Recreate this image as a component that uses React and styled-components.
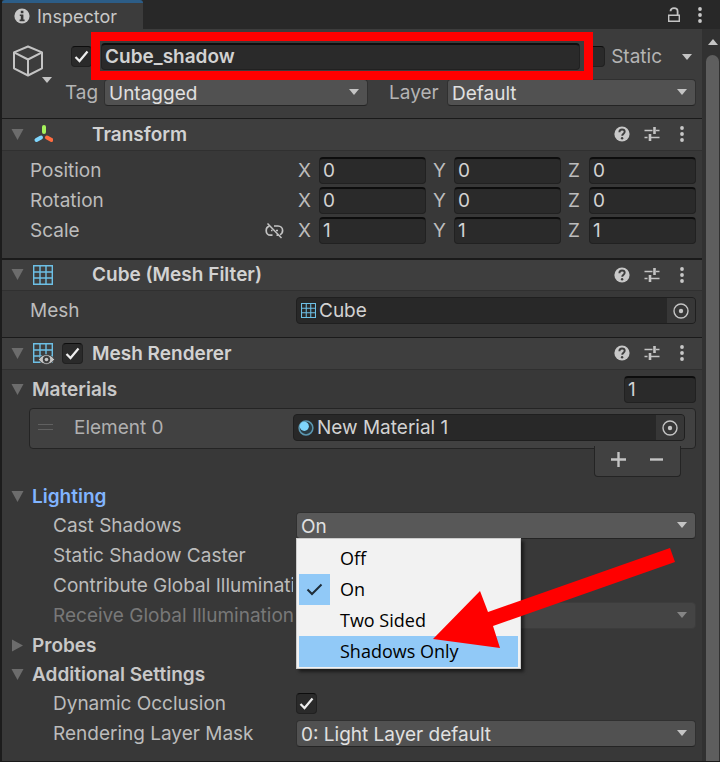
// App.jsx
import React, { useState } from "react";
import styled, { createGlobalStyle, css } from "styled-components";

const GlobalStyle = createGlobalStyle`
    * {
        box-sizing: border-box;
    }

    body {
        margin: 0;
        background: #383838;
        color: #c2c2c2;
        font-family: Inter, "Noto Sans", sans-serif;
        font-size: 19px;
        line-height: 27px;
    }

    button, input, select {
        margin: 0;
        font: inherit;
        color: inherit;
    }
`;

/* icons */

const InfoIcon = () => (
    <svg width="16" height="16" viewBox="0 0 16 16">
        <circle cx="8" cy="8" r="7.6" fill="#c8c8c8" />
        <path d="M6.8 2.8h2.6v2.4H6.8zM5.8 6.4h3.6v5h1.2v1.8H5.6v-1.8h1.2V8H5.8z" fill="#383838" />
    </svg>
);

const LockIcon = () => (
    <svg width="14" height="16" viewBox="0 0 14 16" fill="none" stroke="#c4c4c4">
        <path d="M1.7 8.2h10.6v6.1H1.7z" strokeWidth="1.4" />
        <path d="M3.5 4.2C3.500 2 5 1.200 7 1.200s3.600 1 3.600 3.200v3.600" strokeWidth="1.800" />
    </svg>
);

const DotsIcon = () => (
    <svg width="6" height="16" viewBox="0 0 6 16" fill="#c8c8c8">
        <circle cx="3" cy="2" r="1.9" />
        <circle cx="3" cy="8" r="1.9" />
        <circle cx="3" cy="14" r="1.9" />
    </svg>
);

const HelpIcon = () => (
    <svg width="16" height="16" viewBox="0 0 16 16">
        <circle cx="8" cy="8" r="7.6" fill="#c8c8c8" />
        <path d="M5.4 6.2C5.4 4.5 6.5 3.5 8 3.5s2.7 1 2.7 2.3c0 1.9-2.5 1.9-2.5 4" fill="none" stroke="#3e3e3e" strokeWidth="1.9" />
        <circle cx="8.1" cy="12.2" r="1.2" fill="#3e3e3e" />
    </svg>
);

const PresetIcon = () => (
    <svg width="16" height="16" viewBox="0 0 16 16" fill="none" stroke="#c4c4c4">
        <path d="M.5 4.5h8M12 4.5h3.5M.5 11.5h3M7 11.5h8.5" strokeWidth="1.4" />
        <path d="M10.5 1v7M6 8v7" strokeWidth="2.6" />
    </svg>
);

const CubeIcon = () => (
    <svg width="32" height="32" viewBox="0 0 32 32" fill="none" stroke="#c4c4c4" strokeWidth="2" strokeLinejoin="round">
        <path d="M16 1.5 30 7.3v16L16 30.5 2 23.3v-16z" />
        <path d="M2 7.3 16 14.5 30 7.3M16 14.5v16" />
    </svg>
);

const Arrow = ({ color = "#c4c4c4" }) => (
    <svg width="10" height="6" viewBox="0 0 10 6">
        <path d="M0 0h10L5 6z" fill={color} />
    </svg>
);

const FoldIcon = ({ open }) => (
    <svg width="13" height="13" viewBox="0 0 13 13">
        <path d={open ? "M.5 1h12l-6 11z" : "M1 .5v12l11-6z"} fill="#6c6c6c" />
    </svg>
);

const TransformIcon = () => (
    <svg width="20" height="20" viewBox="0 0 20 20" fill="none" strokeWidth="4" strokeLinecap="round">
        <path d="M11 3v5" stroke="#a6f25c" />
        <path d="m8 13.5-4.500 2.500" stroke="#7fd6fd" />
        <path d="m14 13.5 4.500 2.500" stroke="#ff6c40" />
    </svg>
);

const MeshIcon = ({ size = 20, eye }) => (
    <svg width={size} height={size} viewBox="0 0 20 20" fill="none" overflow="visible">
        <path d="M.7.7h18.6v18.6H.7zM7 .7v18.6M13 .7v18.6M.7 7h18.6M.7 13h18.6" stroke="#6dc0e6" strokeWidth="1.4" />
        {eye && (
            <>
                <path d="M5.5 16.5C9 10 18 10 21.5 16.5 18 23 9 23 5.5 16.5z" fill="#c4c4c4" stroke="#3e3e3e" />
                <circle cx="13.5" cy="16.5" r="3.7" fill="#3e3e3e" />
                <circle cx="13.5" cy="16.5" r="1.8" fill="#c4c4c4" />
            </>
        )}
    </svg>
);

const MaterialIcon = () => (
    <svg width="16" height="16" viewBox="0 0 16 16">
        <circle cx="8" cy="8" r="6.9" fill="#2a3b43" stroke="#5b97b1" strokeWidth="1.5" />
        <circle cx="6.3" cy="6.3" r="4.6" fill="#7fd6fd" />
    </svg>
);

const PickIcon = () => (
    <svg width="16" height="16" viewBox="0 0 16 16">
        <circle cx="8" cy="8" r="7" fill="none" stroke="#c4c4c4" strokeWidth="1.4" />
        <circle cx="8" cy="8" r="2.2" fill="#c4c4c4" />
    </svg>
);

const UnlinkIcon = () => (
    <svg width="19" height="16" viewBox="0 0 19 16" fill="none" stroke="#c4c4c4" strokeWidth="1.7">
        <path d="M4.5 3.2C2.5 3.6 1.2 5.4 1.2 7.7c0 2.6 1.8 4.5 4.3 4.5h2M9 3h4c2.600 0 4.600 2 4.600 4.500 0 2-1.100 3.500-2.600 4.200M11.500 12.200h2M6 7.500h1.500M11 7.500h2" />
        <path d="m2.500.5 14 14.500" strokeWidth="1.500" />
    </svg>
);

const Tick = () => (
    <svg width="15" height="13" viewBox="0 0 15 13">
        <path d="m1.5 7 4 4L13.5 1.500" fill="none" stroke="#eeeeee" strokeWidth="2.200" />
    </svg>
);

const MenuTick = () => (
    <svg width="17" height="13" viewBox="0 0 17 13">
        <path d="m1.5 6.5 4.500 4.500L15.500 1.500" fill="none" stroke="#1e2c38" strokeWidth="2" />
    </svg>
);

const PlusIcon = () => (
    <svg width="15" height="15" viewBox="0 0 15 15">
        <path d="M0 7.5h15M7.5 0v15" stroke="#c4c4c4" strokeWidth="2.4" />
    </svg>
);

const MinusIcon = () => (
    <svg width="13" height="15" viewBox="0 0 13 15">
        <path d="M0 7.5h13" stroke="#c4c4c4" strokeWidth="2.4" />
    </svg>
);

const HandleIcon = () => (
    <svg width="15" height="7" viewBox="0 0 15 7">
        <path d="M0 .5h15M0 5.5h15" stroke="#606060" />
    </svg>
);

/* small controls */

const Check = ({ label, id, defaultChecked }) => {
    const [on, setOn] = useState(!!defaultChecked);
    return (
        <CheckWrap>
            <CheckInput id={id} aria-label={label} checked={on} onChange={() => setOn(!on)} />
            {on && <Tick />}
        </CheckWrap>
    );
};

const Dropdown = ({ id, label, options, value, active, disabled }) => (
    <DropdownWrap>
        <Select id={id} aria-label={label} defaultValue={value} disabled={disabled} $active={active}>
            {options.map((o) => (
                <option key={o}>{o}</option>
            ))}
        </Select>
        <Arrow color={disabled ? "#858585" : "#c4c4c4"} />
    </DropdownWrap>
);

const ObjectField = ({ icon, value, label }) => (
    <ObjectWrap>
        {icon}
        <ObjectName>{value}</ObjectName>
        <PickButton aria-label={`Select ${label}`}>
            <PickIcon />
        </PickButton>
    </ObjectWrap>
);

const ComponentHeader = ({ icon, title, toggle, thick }) => (
    <Header $thick={thick}>
        <FoldButton aria-label={`Fold ${title}`}>
            <FoldIcon open />
        </FoldButton>
        <HeaderIcon>{icon}</HeaderIcon>
        <HeaderToggle>{toggle && <Check label={`Enable ${title}`} defaultChecked />}</HeaderToggle>
        <HeaderTitle>{title}</HeaderTitle>
        <IconButton aria-label="Help"><HelpIcon /></IconButton>
        <IconButton aria-label="Presets"><PresetIcon /></IconButton>
        <IconButton aria-label="More"><DotsIcon /></IconButton>
    </Header>
);

const VectorRow = ({ name, value, linked }) => (
    <Row>
        <Label as="span">
            {name}
            {linked && (
                <LinkButton aria-label="Constrain proportions">
                    <UnlinkIcon />
                </LinkButton>
            )}
        </Label>
        <Vector>
            {["X", "Y", "Z"].map((axis) => (
                <Axis key={axis}>
                    {axis}
                    <TextInput aria-label={`${name} ${axis}`} defaultValue={value} />
                </Axis>
            ))}
        </Vector>
    </Row>
);

const Foldout = ({ title, open, blue }) => (
    <FoldoutRow $blue={blue} aria-expanded={!!open}>
        <FoldIcon open={open} />
        {title}
    </FoldoutRow>
);

const SHADOW_MODES = ["Off", "On", "Two Sided", "Shadows Only"];

const App = () => {
    return (
        <>
            <GlobalStyle />
            <Window>
                <TabBar>
                    <Tab>
                        <InfoIcon />
                        Inspector
                    </Tab>
                    <TabTools>
                        <ToolButton aria-label="Lock"><LockIcon /></ToolButton>
                        <ToolButton aria-label="Menu"><DotsIcon /></ToolButton>
                    </TabTools>
                </TabBar>
                <Main>
                    <Content>
                        <ObjectHeader>
                            <CubeButton aria-label="Object icon">
                                <CubeIcon />
                                <Arrow />
                            </CubeButton>
                            <ObjectRows>
                                <NameRow>
                                    <Check label="Active" defaultChecked />
                                    <NameBox>
                                        <TextInput aria-label="Name" defaultValue="Cube_shadow" $bold />
                                    </NameBox>
                                    <Check id="static" label="Static" />
                                    <StaticLabel htmlFor="static">Static</StaticLabel>
                                    <StaticButton aria-label="Static flags"><Arrow /></StaticButton>
                                </NameRow>
                                <TagRow>
                                    <label htmlFor="tag">Tag</label>
                                    <Dropdown id="tag" options={["Untagged"]} />
                                    <LayerLabel htmlFor="layer">Layer</LayerLabel>
                                    <Dropdown id="layer" options={["Default"]} />
                                </TagRow>
                            </ObjectRows>
                        </ObjectHeader>

                        <ComponentHeader title="Transform" icon={<TransformIcon />} />
                        <Section>
                            <VectorRow name="Position" value="0" />
                            <VectorRow name="Rotation" value="0" />
                            <VectorRow name="Scale" value="1" linked />
                        </Section>

                        <ComponentHeader title="Cube (Mesh Filter)" icon={<MeshIcon />} thick />
                        <Section>
                            <Row>
                                <Label as="span">Mesh</Label>
                                <ObjectField label="mesh" value="Cube" icon={<MeshIcon size={15} />} />
                            </Row>
                        </Section>

                        <ComponentHeader title="Mesh Renderer" icon={<MeshIcon eye />} toggle />
                        <Section>
                            <MaterialsRow>
                                <Foldout title="Materials" open />
                                <TextInput aria-label="Materials size" defaultValue="1" />
                            </MaterialsRow>
                            <List>
                                <HandleIcon />
                                <ElementName>Element 0</ElementName>
                                <ObjectField label="material" value="New Material 1" icon={<MaterialIcon />} />
                            </List>
                            <ListFooter>
                                <ListButton aria-label="Add"><PlusIcon /></ListButton>
                                <ListButton aria-label="Remove"><MinusIcon /></ListButton>
                            </ListFooter>

                            <Foldout title="Lighting" open blue />
                            <Row>
                                <Label htmlFor="cast" $nested>Cast Shadows</Label>
                                <PopupAnchor>
                                    <Dropdown id="cast" options={SHADOW_MODES} value="On" active />
                                    <Popup role="listbox" aria-label="Cast Shadows">
                                        {SHADOW_MODES.map((mode) => (
                                            <PopupItem
                                                key={mode}
                                                role="option"
                                                aria-selected={mode === "On"}
                                                $hover={mode === "Shadows Only"}
                                            >
                                                <PopupCheck $on={mode === "On"}>{mode === "On" && <MenuTick />}</PopupCheck>
                                                {mode}
                                            </PopupItem>
                                        ))}
                                    </Popup>
                                    <Pointer width="243" height="101" viewBox="0 0 243 101">
                                        <path d="M0 92 47 44l8 21L237 1l5 14L60 79l7 22z" fill="#ff0000" />
                                    </Pointer>
                                </PopupAnchor>
                            </Row>
                            <Row>
                                <Label htmlFor="caster" $nested>Static Shadow Caster</Label>
                                <Check id="caster" label="Static Shadow Caster" />
                            </Row>
                            <Row>
                                <Label htmlFor="contribute" $nested>Contribute Global Illumination</Label>
                                <Check id="contribute" label="Contribute Global Illumination" />
                            </Row>
                            <Row>
                                <Label htmlFor="receive" $nested $dim>Receive Global Illumination</Label>
                                <Dropdown id="receive" options={["Light Probes"]} disabled />
                            </Row>
                            <Foldout title="Probes" />
                            <Foldout title="Additional Settings" open />
                            <Row>
                                <Label htmlFor="occlusion" $nested>Dynamic Occlusion</Label>
                                <Check id="occlusion" label="Dynamic Occlusion" defaultChecked />
                            </Row>
                            <Row>
                                <Label htmlFor="mask" $nested>Rendering Layer Mask</Label>
                                <Dropdown id="mask" options={["0: Light Layer default"]} />
                            </Row>
                        </Section>
                    </Content>
                    <Scrollbar>
                        <ScrollButton aria-label="Scroll up">
                            <svg width="10" height="6" viewBox="0 0 10 6">
                                <path d="M0 6h10L5 0z" fill="#c4c4c4" />
                            </svg>
                        </ScrollButton>
                        <Thumb />
                    </Scrollbar>
                </Main>
            </Window>
        </>
    );
};

export default App;

const plainButton = css`
    display: flex;
    align-items: center;
    justify-content: center;
    padding: 0;
    border: 0;
    background: none;
`;

const Window = styled.div`
    display: flex;
    flex-direction: column;
    min-height: 100vh;
    border-left: 2px solid #1c1c1c;
    border-bottom: 1px solid #1a1a1a;
`;

const TabBar = styled.header`
    display: flex;
    justify-content: space-between;
    height: 29px;
    background: #282828;
`;

const Tab = styled.div`
    display: flex;
    align-items: center;
    gap: 7px;
    padding: 0 26px 0 12px;
    border-top: 3px solid #2c5d87;
    border-radius: 3px 3px 0 0;
    background: #3c3c3c;
    color: #c8c8c8;
    font-size: 18px;
`;

const TabTools = styled.div`
    display: flex;
    padding-right: 7px;
`;

const ToolButton = styled.button`
    ${plainButton}
    width: 26px;
`;

const Main = styled.main`
    display: flex;
    flex: 1;
`;

const Content = styled.div`
    flex: 1;
    min-width: 0;
`;

const ObjectHeader = styled.section`
    display: flex;
    padding: 14px 6px 12px 10px;
    background: #3c3c3c;
`;

const CubeButton = styled.button`
    ${plainButton}
    flex-direction: column;
    align-items: flex-end;
    justify-content: flex-start;
    width: 40px;
    padding-top: 2px;

    svg:first-child {
        margin-right: 8px;
    }
`;

const ObjectRows = styled.div`
    flex: 1;
    display: flex;
    flex-direction: column;
    gap: 9px;
`;

const NameRow = styled.div`
    display: flex;
    align-items: center;
    padding-left: 19px;
`;

const NameBox = styled.div`
    position: relative;
    flex: 1;
    margin: 0 4px 0 9px;

    &::after {
        content: "";
        position: absolute;
        inset: -11px -13px -10px -10px;
        border: 9px solid #ff0000;
        pointer-events: none;
        z-index: 1;
    }
`;

const StaticLabel = styled.label`
    margin-left: 6px;
    color: #b4b4b4;
`;

const StaticButton = styled.button`
    ${plainButton}
    margin: 0 4px 0 auto;
    padding-left: 20px;
`;

const TagRow = styled.div`
    display: grid;
    grid-template-columns: 39px 264px 79px 1fr;
    padding-left: 13px;
    color: #b4b4b4;
`;

const LayerLabel = styled.label`
    padding-left: 21px;
`;

const CheckWrap = styled.span`
    position: relative;
    display: block;
    align-self: center;
    width: 21px;
    height: 21px;

    svg {
        position: absolute;
        top: 4px;
        left: 3px;
        pointer-events: none;
    }
`;

const CheckInput = styled.input.attrs({ type: "checkbox" })`
    appearance: none;
    display: block;
    width: 21px;
    height: 21px;
    border: 1px solid #212121;
    border-top-color: #0d0d0d;
    border-radius: 4px;
    background: #2a2a2a;
`;

const TextInput = styled.input`
    display: block;
    width: 100%;
    min-width: 0;
    height: 27px;
    padding: 0 3px 1px;
    border: 1px solid #212121;
    border-top: 2px solid #0d0d0d;
    border-radius: 4px;
    outline: 0;
    background: #2a2a2a;
    color: #d2d2d2;
    font-weight: ${({ $bold }) => ($bold ? 600 : 400)};
`;

const DropdownWrap = styled.div`
    position: relative;
    min-width: 0;

    svg {
        position: absolute;
        top: 10px;
        right: 9px;
        pointer-events: none;
    }
`;

const Select = styled.select`
    appearance: none;
    display: block;
    width: 100%;
    height: 27px;
    padding: 0 24px 0 4px;
    border: 1px solid #303030;
    border-bottom-color: #242424;
    border-radius: 4px;
    background: ${({ $active }) => ($active ? "#585858" : "#515151")};
    color: #e0e0e0;

    &:disabled {
        border-color: #3c3c3c;
        background: #444444;
        color: #8a8a8a;
        opacity: 1;
    }
`;

const ObjectWrap = styled.div`
    display: flex;
    align-items: center;
    gap: 3px;
    min-width: 0;
    height: 27px;
    padding-left: 4px;
    border: 1px solid #1f1f1f;
    border-radius: 4px;
    background: #282828;
    color: #d2d2d2;
`;

const ObjectName = styled.span`
    flex: 1;
`;

const PickButton = styled.button`
    ${plainButton}
    width: 28px;
    height: 25px;
    border-radius: 0 3px 3px 0;
    background: #373737;
`;

const Header = styled.div`
    display: flex;
    align-items: center;
    height: 33px;
    margin-top: ${({ $thick }) => ($thick ? "1px" : "0")};
    padding: 0 5px 1px 9px;
    border-top: ${({ $thick }) => ($thick ? "2px" : "1px")} solid #1a1a1a;
    border-bottom: 1px solid #303030;
    background: #3e3e3e;
`;

const FoldButton = styled.button`
    ${plainButton}
`;

const HeaderIcon = styled.span`
    display: flex;
    width: 20px;
    margin: 0 9px;
`;

const HeaderToggle = styled.span`
    width: 30px;
`;

const HeaderTitle = styled.h2`
    flex: 1;
    margin: 0;
    color: #d2d2d2;
    font-size: 19px;
    font-weight: 600;
`;

const IconButton = styled.button`
    ${plainButton}
    width: 30px;
    height: 30px;
`;

const Section = styled.section`
    display: flex;
    flex-direction: column;
    gap: 3px;
    padding: 6px 6px 13px 0;
`;

const Row = styled.div`
    display: grid;
    grid-template-columns: 294px 1fr;
    height: 27px;
`;

const Label = styled.label`
    display: flex;
    justify-content: space-between;
    margin-right: 3px;
    padding-left: ${({ $nested }) => ($nested ? "51px" : "28px")};
    overflow: hidden;
    white-space: nowrap;
    color: ${({ $dim }) => ($dim ? "#787878" : "#bcbcbc")};
`;

const LinkButton = styled.button`
    ${plainButton}
    padding-right: 9px;
`;

const Vector = styled.div`
    display: grid;
    grid-template-columns: repeat(3, 1fr);
    gap: 5px;
`;

const Axis = styled.label`
    display: grid;
    grid-template-columns: 21px 1fr;
    padding-left: 2px;
    color: #bcbcbc;
`;

const FoldoutRow = styled.button`
    ${plainButton}
    justify-content: flex-start;
    gap: 8px;
    height: 26px;
    padding-left: 9px;
    color: ${({ $blue }) => ($blue ? "#81b4ff" : "#c8c8c8")};
    font-weight: 600;
`;

const MaterialsRow = styled.div`
    display: grid;
    grid-template-columns: 1fr 72px;
    margin-bottom: 2px;
`;

const List = styled.div`
    display: grid;
    grid-template-columns: 36px 219px 1fr;
    align-items: center;
    height: 41px;
    margin-left: 27px;
    padding: 0 10px 2px 8px;
    border: 1px solid #242424;
    border-radius: 4px;
    background: #414141;
`;

const ElementName = styled.span`
    color: #b0b0b0;
`;

const ListFooter = styled.div`
    position: relative;
    display: flex;
    align-self: flex-end;
    width: 87px;
    height: 31px;
    margin: -6px 15px 3px 0;
    padding: 0 5px 4px;
    border: 1px solid #242424;
    border-top: 0;
    border-radius: 0 0 4px 4px;
    background: #414141;
`;

const ListButton = styled.button`
    ${plainButton}
    flex: 1;
`;

const PopupAnchor = styled.div`
    position: relative;
`;

const Popup = styled.div`
    position: absolute;
    top: 26px;
    left: 0;
    z-index: 2;
    width: 225px;
    padding: 4px 2px 1px;
    border: 1px solid #cccccc;
    background: #f2f2f2;
    box-shadow: 3px 3px 3px rgba(0, 0, 0, 0.5);
    font-family: "Open Sans", "Noto Sans CJK KR", sans-serif;
    font-size: 18px;
`;

const PopupItem = styled.button`
    ${plainButton}
    justify-content: flex-start;
    gap: 10px;
    width: 100%;
    height: 31px;
    background: ${({ $hover }) => ($hover ? "#91c9f7" : "none")};
    color: #000000;
`;

const PopupCheck = styled.span`
    display: flex;
    align-items: center;
    justify-content: center;
    width: 31px;
    height: 31px;
    background: ${({ $on }) => ($on ? "#91c9f7" : "none")};
`;

const Pointer = styled.svg`
    position: absolute;
    top: 35px;
    left: 137px;
    z-index: 3;
    pointer-events: none;
`;

const Scrollbar = styled.aside`
    display: flex;
    flex-direction: column;
    width: 18px;
    padding: 0 1px 0 4px;
    background: #313131;
`;

const ScrollButton = styled.button`
    ${plainButton}
    height: 26px;
`;

const Thumb = styled.div`
    flex: 1;
    border-radius: 7px 7px 0 0;
    background: #5e5e5e;
`;
